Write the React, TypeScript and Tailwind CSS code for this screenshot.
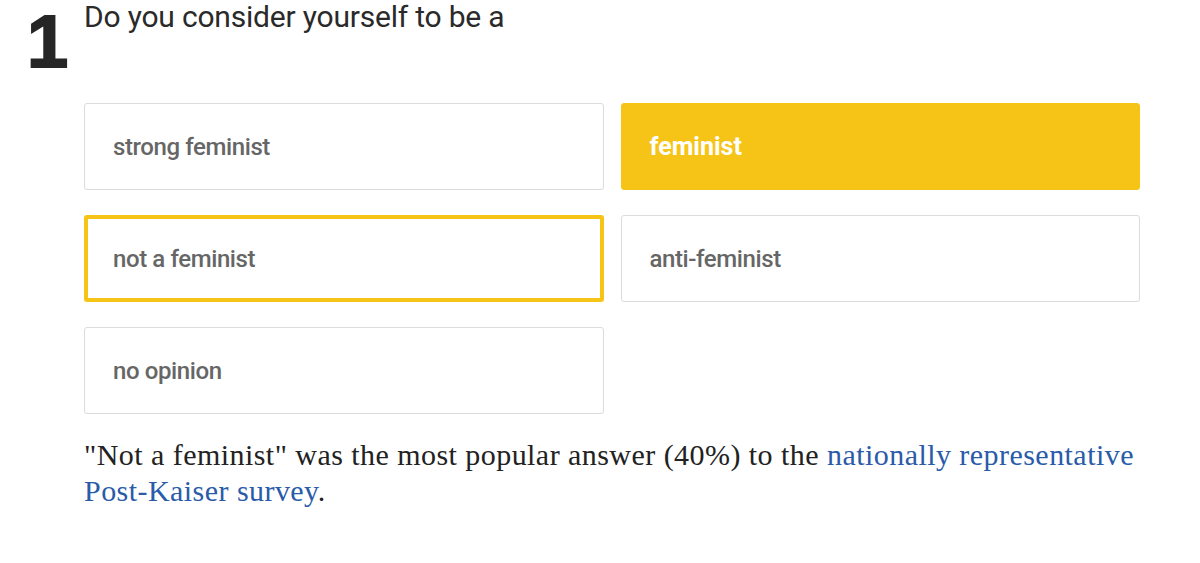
import React from 'react';

const options = [
  { label: 'strong feminist', state: 'idle' },
  { label: 'feminist', state: 'picked' },
  { label: 'not a feminist', state: 'answer' },
  { label: 'anti-feminist', state: 'idle' },
  { label: 'no opinion', state: 'idle' },
];

const sans = { fontFamily: 'Roboto, "Liberation Sans", Arial, sans-serif' };

const App: React.FC = () => {
  return (
    <div className="w-[1200px] h-[563px] bg-white overflow-hidden">
      {/* Question header */}
      <div className="flex pl-[27px] pt-[2px]">
        <div
          className="w-[57px] pt-[3px] text-[74px] leading-none font-black text-[#262626] [-webkit-text-stroke:2px_#262626]"
          style={{ fontFamily: '"Liberation Sans", Arial, sans-serif' }}
        >
          1
        </div>
        <h2
          className="text-[30px] leading-[36px] text-[#2a2a2a] -mt-[3px] tracking-[-0.2px]"
          style={sans}
        >
          Do you consider yourself to be a
        </h2>
      </div>

      {/* Options */}
      <div className="grid grid-cols-2 gap-x-[17px] gap-y-[25px] pl-[84px] pr-[60px] mt-[24px]">
        {options.map((o) => (
          <div
            key={o.label}
            className={
              o.state === 'picked'
                ? 'h-[87px] flex items-center px-[28px] rounded-[3px] bg-[#f6c416] border border-[#f6c416] text-white font-bold'
                : o.state === 'answer'
                ? 'h-[87px] flex items-center px-[25px] rounded-[3px] bg-white border-[4px] border-[#f6c416] text-[#666] font-medium'
                : 'h-[87px] flex items-center px-[28px] rounded-[3px] bg-white border border-[#dcdcdc] text-[#666] font-medium'
            }
          >
            <span
              className={o.state === 'picked' ? 'text-[25px] tracking-[0px] pt-[1px]' : 'text-[24px] tracking-[-0.4px] pt-[1px]'}
              style={sans}
            >
              {o.label}
            </span>
          </div>
        ))}
      </div>

      {/* Result note */}
      <p
        className="pl-[84px] pr-[50px] mt-[23px] text-[30px] leading-[36px] tracking-[0.45px] text-[#222]"
        style={{ fontFamily: '"Liberation Serif", Georgia, serif' }}
      >
        "Not a feminist" was the most popular answer (40%) to the{' '}
        <a className="text-[#2a5ba8]">
          nationally representative <span className="whitespace-nowrap">Post-Kaiser</span> survey
        </a>
        .
      </p>
    </div>
  );
};

export default App;
